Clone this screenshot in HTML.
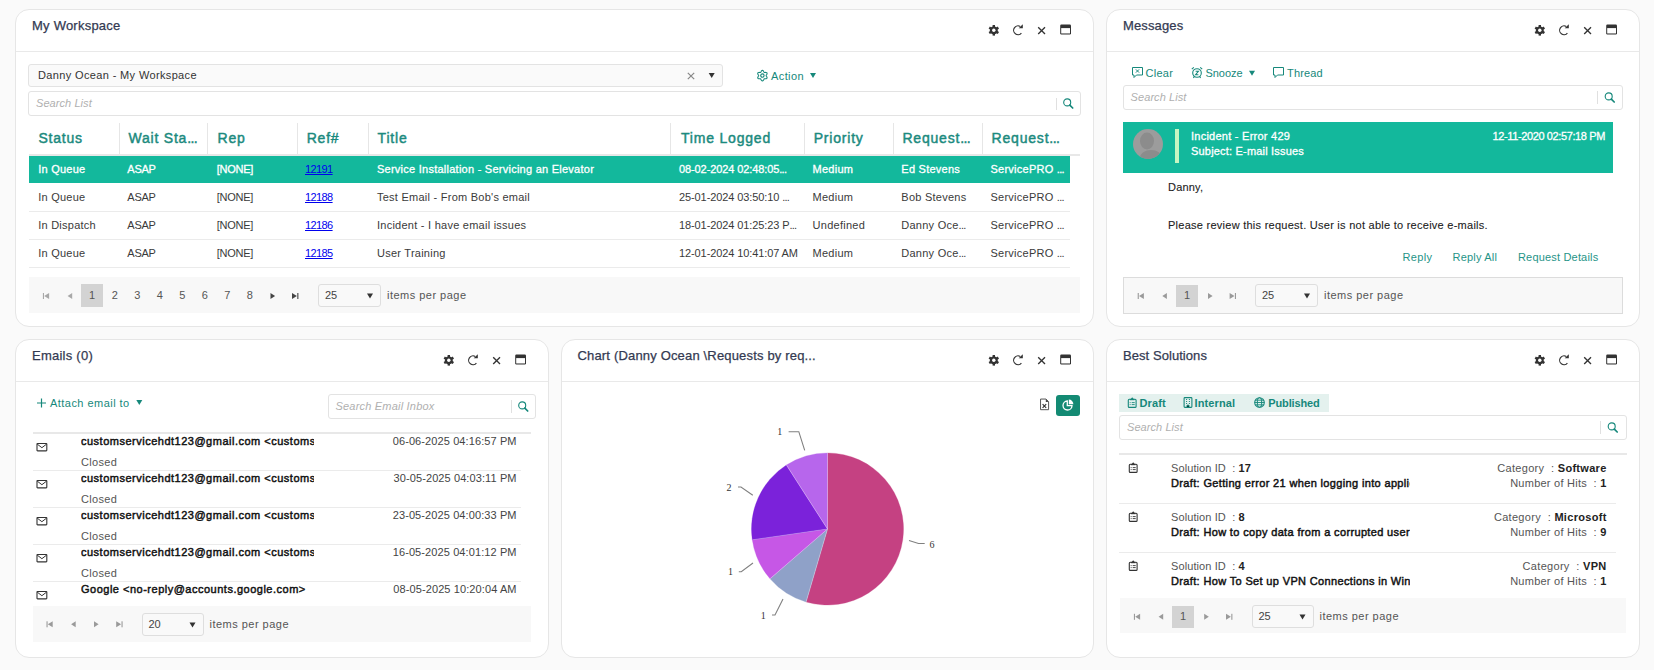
<!DOCTYPE html><html><head><meta charset="utf-8"><style>html,body{margin:0;padding:0;}body{width:1654px;height:670px;background:#fafafa;position:relative;overflow:hidden;font-family:"Liberation Sans",sans-serif;}</style></head><body>
<div style="position:absolute;left:15px;top:9px;width:1079px;height:318px;background:#fff;border:1px solid #e6e6e6;border-radius:14px;box-sizing:border-box;"></div>
<div style="position:absolute;left:16px;top:51px;width:1077px;height:1px;background:#e9e9e9;"></div>
<div style="position:absolute;left:32px;top:17.55px;font-size:13px;line-height:16px;font-weight:400;color:#343a52;white-space:nowrap;font-family:'Liberation Sans', sans-serif;letter-spacing:0.23px;-webkit-text-stroke:0.25px #343a52;">My Workspace</div>
<svg style="position:absolute;left:987px;top:24px;overflow:visible" width="13" height="13" viewBox="0 0 13 13"><g transform="translate(0.80 0.30)"><g fill="#333"><rect x="4.8" y="0.7" width="2.4" height="2.6" transform="rotate(0 6 6)"/><rect x="4.8" y="0.7" width="2.4" height="2.6" transform="rotate(60 6 6)"/><rect x="4.8" y="0.7" width="2.4" height="2.6" transform="rotate(120 6 6)"/><rect x="4.8" y="0.7" width="2.4" height="2.6" transform="rotate(180 6 6)"/><rect x="4.8" y="0.7" width="2.4" height="2.6" transform="rotate(240 6 6)"/><rect x="4.8" y="0.7" width="2.4" height="2.6" transform="rotate(300 6 6)"/><circle cx="6" cy="6" r="3.9"/></g><circle cx="6" cy="6" r="1.7" fill="#fff"/></g></svg>
<svg style="position:absolute;left:1012px;top:24px;overflow:visible" width="13" height="13" viewBox="0 0 13 13"><g transform="translate(0.00 0.10)"><path d="M9.4 9.0 A4.4 4.4 0 1 1 8.3 2.4" fill="none" stroke="#333" stroke-width="1.15"/><path d="M6.7 4.2 L10.8 4.2 L10.8 0.2 Z" fill="#333"/></g></svg>
<svg style="position:absolute;left:1037px;top:26px;overflow:visible" width="10" height="10" viewBox="0 0 10 10"><g transform="translate(0.10 0.10)"><path d="M1.1 1.1 L7.9 7.9 M7.9 1.1 L1.1 7.9" stroke="#333" stroke-width="1.35"/></g></svg>
<svg style="position:absolute;left:1059px;top:24px;overflow:visible" width="13" height="12" viewBox="0 0 13 12"><g transform="translate(0.70 0.00)"><rect x="0.5" y="0.5" width="10.8" height="9.9" rx="1.2" fill="#333"/><rect x="1.5" y="4.1" width="8.8" height="4.9" fill="#fff"/><rect x="1.5" y="9" width="8.8" height="0.9" fill="#999"/></g></svg>
<div style="position:absolute;left:28px;top:64px;width:695px;height:23px;background:#fafafa;border:1px solid #e3e3e3;border-radius:3px;box-sizing:border-box;"></div>
<div style="position:absolute;left:38px;top:68.74px;font-size:11px;line-height:13px;font-weight:400;color:#333;white-space:nowrap;font-family:'Liberation Sans', sans-serif;letter-spacing:0.36px;">Danny Ocean - My Workspace</div>
<svg style="position:absolute;left:687px;top:72px;overflow:visible" width="9" height="9" viewBox="0 0 9 9"><g transform="translate(0.00 0.00)"><path d="M0.8 0.8 L7.2 7.2 M7.2 0.8 L0.8 7.2" stroke="#888" stroke-width="1.2"/></g></svg>
<svg style="position:absolute;left:708px;top:73px;overflow:visible" width="7" height="6" viewBox="0 0 7 6"><g transform="translate(0.70 0.00)"><path d="M0 0 L6 0 L3.0 5 Z" fill="#333"/></g></svg>
<svg style="position:absolute;left:756px;top:69px;overflow:visible" width="13" height="13" viewBox="0 0 13 13"><g transform="translate(0.40 0.60)"><path d="M6.00 0.75 L6.45 0.87 L6.85 1.20 L7.16 1.65 L7.41 2.12 L7.63 2.51 L7.88 2.75 L8.21 2.85 L8.65 2.84 L9.18 2.82 L9.73 2.87 L10.22 3.05 L10.55 3.38 L10.67 3.82 L10.58 4.33 L10.35 4.84 L10.06 5.28 L9.84 5.66 L9.75 6.00 L9.84 6.34 L10.06 6.72 L10.35 7.16 L10.58 7.67 L10.67 8.18 L10.55 8.62 L10.22 8.95 L9.73 9.13 L9.18 9.18 L8.65 9.16 L8.21 9.15 L7.88 9.25 L7.63 9.49 L7.41 9.88 L7.16 10.35 L6.85 10.80 L6.45 11.13 L6.00 11.25 L5.55 11.13 L5.15 10.80 L4.84 10.35 L4.59 9.88 L4.37 9.49 L4.12 9.25 L3.79 9.15 L3.35 9.16 L2.82 9.18 L2.27 9.13 L1.78 8.95 L1.45 8.63 L1.33 8.18 L1.42 7.67 L1.65 7.16 L1.94 6.72 L2.16 6.34 L2.25 6.00 L2.16 5.66 L1.94 5.28 L1.65 4.84 L1.42 4.33 L1.33 3.82 L1.45 3.37 L1.78 3.05 L2.27 2.87 L2.82 2.82 L3.35 2.84 L3.79 2.85 L4.12 2.75 L4.37 2.51 L4.59 2.12 L4.84 1.65 L5.15 1.20 L5.55 0.87 Z" fill="none" stroke="#16887b" stroke-width="1.1" stroke-linejoin="round"/><circle cx="6" cy="6" r="1.7" fill="none" stroke="#16887b" stroke-width="1.1"/></g></svg>
<div style="position:absolute;left:771px;top:69.74px;font-size:11px;line-height:13px;font-weight:400;color:#16887b;white-space:nowrap;font-family:'Liberation Sans', sans-serif;letter-spacing:0.4px;">Action</div>
<svg style="position:absolute;left:810px;top:72px;overflow:visible" width="7" height="6" viewBox="0 0 7 6"><g transform="translate(0.00 0.90)"><path d="M0 0 L6 0 L3.0 5 Z" fill="#16887b"/></g></svg>
<div style="position:absolute;left:28px;top:91px;width:1053px;height:25px;background:#fff;border:1px solid #e3e3e3;border-radius:3px;box-sizing:border-box;"></div>
<div style="position:absolute;left:36px;top:96.74px;font-size:11px;line-height:13px;font-weight:400;color:#b0b0b0;white-space:nowrap;font-family:'Liberation Sans', sans-serif;letter-spacing:0.07px;font-style:italic;">Search List</div>
<div style="position:absolute;left:1056px;top:98px;width:1px;height:12px;background:#e0e0e0;"></div>
<svg style="position:absolute;left:1062px;top:97px;overflow:visible" width="13" height="13" viewBox="0 0 13 13"><g transform="translate(0.00 0.50)"><circle cx="5.2" cy="4.9" r="3.5" fill="none" stroke="#16887b" stroke-width="1.1"/><path d="M7.8 7.6 L10.7 10.5" stroke="#16887b" stroke-width="1.7" stroke-linecap="round"/></g></svg>
<div style="position:absolute;left:119px;top:123px;width:1px;height:31px;background:#e6e6e6;"></div>
<div style="position:absolute;left:207px;top:123px;width:1px;height:31px;background:#e6e6e6;"></div>
<div style="position:absolute;left:297px;top:123px;width:1px;height:31px;background:#e6e6e6;"></div>
<div style="position:absolute;left:368px;top:123px;width:1px;height:31px;background:#e6e6e6;"></div>
<div style="position:absolute;left:670px;top:123px;width:1px;height:31px;background:#e6e6e6;"></div>
<div style="position:absolute;left:804px;top:123px;width:1px;height:31px;background:#e6e6e6;"></div>
<div style="position:absolute;left:893px;top:123px;width:1px;height:31px;background:#e6e6e6;"></div>
<div style="position:absolute;left:982px;top:123px;width:1px;height:31px;background:#e6e6e6;"></div>
<div style="position:absolute;left:38.4px;top:129.70px;font-size:14px;line-height:17px;font-weight:400;color:#1b8a7e;white-space:nowrap;font-family:'Liberation Sans', sans-serif;letter-spacing:0.8px;-webkit-text-stroke:0.45px #1b8a7e;">Status</div>
<div style="position:absolute;left:128.4px;top:129.70px;font-size:14px;line-height:17px;font-weight:400;color:#1b8a7e;white-space:nowrap;font-family:'Liberation Sans', sans-serif;letter-spacing:0.8px;-webkit-text-stroke:0.45px #1b8a7e;">Wait Sta<span style="letter-spacing:-0.56px">...</span></div>
<div style="position:absolute;left:217.5px;top:129.70px;font-size:14px;line-height:17px;font-weight:400;color:#1b8a7e;white-space:nowrap;font-family:'Liberation Sans', sans-serif;letter-spacing:0.8px;-webkit-text-stroke:0.45px #1b8a7e;">Rep</div>
<div style="position:absolute;left:306.7px;top:129.70px;font-size:14px;line-height:17px;font-weight:400;color:#1b8a7e;white-space:nowrap;font-family:'Liberation Sans', sans-serif;letter-spacing:0.8px;-webkit-text-stroke:0.45px #1b8a7e;">Ref#</div>
<div style="position:absolute;left:377.6px;top:129.70px;font-size:14px;line-height:17px;font-weight:400;color:#1b8a7e;white-space:nowrap;font-family:'Liberation Sans', sans-serif;letter-spacing:0.8px;-webkit-text-stroke:0.45px #1b8a7e;">Title</div>
<div style="position:absolute;left:681px;top:129.70px;font-size:14px;line-height:17px;font-weight:400;color:#1b8a7e;white-space:nowrap;font-family:'Liberation Sans', sans-serif;letter-spacing:0.8px;-webkit-text-stroke:0.45px #1b8a7e;">Time Logged</div>
<div style="position:absolute;left:813.7px;top:129.70px;font-size:14px;line-height:17px;font-weight:400;color:#1b8a7e;white-space:nowrap;font-family:'Liberation Sans', sans-serif;letter-spacing:0.8px;-webkit-text-stroke:0.45px #1b8a7e;">Priority</div>
<div style="position:absolute;left:902.4px;top:129.70px;font-size:14px;line-height:17px;font-weight:400;color:#1b8a7e;white-space:nowrap;font-family:'Liberation Sans', sans-serif;letter-spacing:0.8px;-webkit-text-stroke:0.45px #1b8a7e;">Request<span style="letter-spacing:-0.56px">...</span></div>
<div style="position:absolute;left:991.6px;top:129.70px;font-size:14px;line-height:17px;font-weight:400;color:#1b8a7e;white-space:nowrap;font-family:'Liberation Sans', sans-serif;letter-spacing:0.8px;-webkit-text-stroke:0.45px #1b8a7e;">Request<span style="letter-spacing:-0.56px">...</span></div>
<div style="position:absolute;left:29px;top:154px;width:1051px;height:2px;background:#e8e8e8;"></div>
<div style="position:absolute;left:29px;top:156px;width:1041px;height:27px;background:#13b89c;"></div>
<div style="position:absolute;left:38.2px;top:162.74px;font-size:11px;line-height:13px;font-weight:400;color:#fff;white-space:nowrap;font-family:'Liberation Sans', sans-serif;letter-spacing:0.25px;-webkit-text-stroke:0.3px #fff;">In Queue</div>
<div style="position:absolute;left:127.3px;top:162.74px;font-size:11px;line-height:13px;font-weight:400;color:#fff;white-space:nowrap;font-family:'Liberation Sans', sans-serif;letter-spacing:-0.25px;-webkit-text-stroke:0.3px #fff;">ASAP</div>
<div style="position:absolute;left:216.7px;top:162.74px;font-size:11px;line-height:13px;font-weight:400;color:#fff;white-space:nowrap;font-family:'Liberation Sans', sans-serif;letter-spacing:-0.25px;-webkit-text-stroke:0.3px #fff;">[NONE]</div>
<div style="position:absolute;left:305px;top:162.74px;font-size:11px;line-height:13px;font-weight:400;color:#0000ee;white-space:nowrap;font-family:'Liberation Sans', sans-serif;letter-spacing:-0.6px;text-decoration:underline;">12191</div>
<div style="position:absolute;left:377px;top:162.74px;font-size:11px;line-height:13px;font-weight:400;color:#fff;white-space:nowrap;font-family:'Liberation Sans', sans-serif;letter-spacing:0.25px;-webkit-text-stroke:0.3px #fff;">Service Installation - Servicing an Elevator</div>
<div style="position:absolute;left:679px;top:162.74px;font-size:11px;line-height:13px;font-weight:400;color:#fff;white-space:nowrap;font-family:'Liberation Sans', sans-serif;letter-spacing:-0.1px;-webkit-text-stroke:0.3px #fff;">08-02-2024 02:48:05<span style="letter-spacing:-0.73px">...</span></div>
<div style="position:absolute;left:812.6px;top:162.74px;font-size:11px;line-height:13px;font-weight:400;color:#fff;white-space:nowrap;font-family:'Liberation Sans', sans-serif;letter-spacing:0.25px;-webkit-text-stroke:0.3px #fff;">Medium</div>
<div style="position:absolute;left:901.3px;top:162.74px;font-size:11px;line-height:13px;font-weight:400;color:#fff;white-space:nowrap;font-family:'Liberation Sans', sans-serif;letter-spacing:0.25px;-webkit-text-stroke:0.3px #fff;">Ed Stevens</div>
<div style="position:absolute;left:990.5px;top:162.74px;font-size:11px;line-height:13px;font-weight:400;color:#fff;white-space:nowrap;font-family:'Liberation Sans', sans-serif;letter-spacing:0.25px;-webkit-text-stroke:0.3px #fff;">ServicePRO <span style="letter-spacing:-0.73px">...</span></div>
<div style="position:absolute;left:29px;top:211px;width:1041px;height:1px;background:#ebebeb;"></div>
<div style="position:absolute;left:38.2px;top:190.74px;font-size:11px;line-height:13px;font-weight:400;color:#3a3a3a;white-space:nowrap;font-family:'Liberation Sans', sans-serif;letter-spacing:0.25px;">In Queue</div>
<div style="position:absolute;left:127.3px;top:190.74px;font-size:11px;line-height:13px;font-weight:400;color:#3a3a3a;white-space:nowrap;font-family:'Liberation Sans', sans-serif;letter-spacing:-0.25px;">ASAP</div>
<div style="position:absolute;left:216.7px;top:190.74px;font-size:11px;line-height:13px;font-weight:400;color:#3a3a3a;white-space:nowrap;font-family:'Liberation Sans', sans-serif;letter-spacing:-0.25px;">[NONE]</div>
<div style="position:absolute;left:305px;top:190.74px;font-size:11px;line-height:13px;font-weight:400;color:#0000ee;white-space:nowrap;font-family:'Liberation Sans', sans-serif;letter-spacing:-0.6px;text-decoration:underline;">12188</div>
<div style="position:absolute;left:377px;top:190.74px;font-size:11px;line-height:13px;font-weight:400;color:#3a3a3a;white-space:nowrap;font-family:'Liberation Sans', sans-serif;letter-spacing:0.25px;">Test Email - From Bob's email</div>
<div style="position:absolute;left:679px;top:190.74px;font-size:11px;line-height:13px;font-weight:400;color:#3a3a3a;white-space:nowrap;font-family:'Liberation Sans', sans-serif;letter-spacing:-0.1px;">25-01-2024 03:50:10 <span style="letter-spacing:-0.73px">...</span></div>
<div style="position:absolute;left:812.6px;top:190.74px;font-size:11px;line-height:13px;font-weight:400;color:#3a3a3a;white-space:nowrap;font-family:'Liberation Sans', sans-serif;letter-spacing:0.25px;">Medium</div>
<div style="position:absolute;left:901.3px;top:190.74px;font-size:11px;line-height:13px;font-weight:400;color:#3a3a3a;white-space:nowrap;font-family:'Liberation Sans', sans-serif;letter-spacing:0.25px;">Bob Stevens</div>
<div style="position:absolute;left:990.5px;top:190.74px;font-size:11px;line-height:13px;font-weight:400;color:#3a3a3a;white-space:nowrap;font-family:'Liberation Sans', sans-serif;letter-spacing:0.25px;">ServicePRO <span style="letter-spacing:-0.73px">...</span></div>
<div style="position:absolute;left:29px;top:239px;width:1041px;height:1px;background:#ebebeb;"></div>
<div style="position:absolute;left:38.2px;top:218.74px;font-size:11px;line-height:13px;font-weight:400;color:#3a3a3a;white-space:nowrap;font-family:'Liberation Sans', sans-serif;letter-spacing:0.25px;">In Dispatch</div>
<div style="position:absolute;left:127.3px;top:218.74px;font-size:11px;line-height:13px;font-weight:400;color:#3a3a3a;white-space:nowrap;font-family:'Liberation Sans', sans-serif;letter-spacing:-0.25px;">ASAP</div>
<div style="position:absolute;left:216.7px;top:218.74px;font-size:11px;line-height:13px;font-weight:400;color:#3a3a3a;white-space:nowrap;font-family:'Liberation Sans', sans-serif;letter-spacing:-0.25px;">[NONE]</div>
<div style="position:absolute;left:305px;top:218.74px;font-size:11px;line-height:13px;font-weight:400;color:#0000ee;white-space:nowrap;font-family:'Liberation Sans', sans-serif;letter-spacing:-0.6px;text-decoration:underline;">12186</div>
<div style="position:absolute;left:377px;top:218.74px;font-size:11px;line-height:13px;font-weight:400;color:#3a3a3a;white-space:nowrap;font-family:'Liberation Sans', sans-serif;letter-spacing:0.25px;">Incident - I have email issues</div>
<div style="position:absolute;left:679px;top:218.74px;font-size:11px;line-height:13px;font-weight:400;color:#3a3a3a;white-space:nowrap;font-family:'Liberation Sans', sans-serif;letter-spacing:-0.1px;">18-01-2024 01:25:23 P<span style="letter-spacing:-0.73px">...</span></div>
<div style="position:absolute;left:812.6px;top:218.74px;font-size:11px;line-height:13px;font-weight:400;color:#3a3a3a;white-space:nowrap;font-family:'Liberation Sans', sans-serif;letter-spacing:0.25px;">Undefined</div>
<div style="position:absolute;left:901.3px;top:218.74px;font-size:11px;line-height:13px;font-weight:400;color:#3a3a3a;white-space:nowrap;font-family:'Liberation Sans', sans-serif;letter-spacing:0.25px;">Danny Oce<span style="letter-spacing:-0.73px">...</span></div>
<div style="position:absolute;left:990.5px;top:218.74px;font-size:11px;line-height:13px;font-weight:400;color:#3a3a3a;white-space:nowrap;font-family:'Liberation Sans', sans-serif;letter-spacing:0.25px;">ServicePRO <span style="letter-spacing:-0.73px">...</span></div>
<div style="position:absolute;left:29px;top:267px;width:1041px;height:1px;background:#ebebeb;"></div>
<div style="position:absolute;left:38.2px;top:246.74px;font-size:11px;line-height:13px;font-weight:400;color:#3a3a3a;white-space:nowrap;font-family:'Liberation Sans', sans-serif;letter-spacing:0.25px;">In Queue</div>
<div style="position:absolute;left:127.3px;top:246.74px;font-size:11px;line-height:13px;font-weight:400;color:#3a3a3a;white-space:nowrap;font-family:'Liberation Sans', sans-serif;letter-spacing:-0.25px;">ASAP</div>
<div style="position:absolute;left:216.7px;top:246.74px;font-size:11px;line-height:13px;font-weight:400;color:#3a3a3a;white-space:nowrap;font-family:'Liberation Sans', sans-serif;letter-spacing:-0.25px;">[NONE]</div>
<div style="position:absolute;left:305px;top:246.74px;font-size:11px;line-height:13px;font-weight:400;color:#0000ee;white-space:nowrap;font-family:'Liberation Sans', sans-serif;letter-spacing:-0.6px;text-decoration:underline;">12185</div>
<div style="position:absolute;left:377px;top:246.74px;font-size:11px;line-height:13px;font-weight:400;color:#3a3a3a;white-space:nowrap;font-family:'Liberation Sans', sans-serif;letter-spacing:0.25px;">User Training</div>
<div style="position:absolute;left:679px;top:246.74px;font-size:11px;line-height:13px;font-weight:400;color:#3a3a3a;white-space:nowrap;font-family:'Liberation Sans', sans-serif;letter-spacing:-0.1px;">12-01-2024 10:41:07 AM</div>
<div style="position:absolute;left:812.6px;top:246.74px;font-size:11px;line-height:13px;font-weight:400;color:#3a3a3a;white-space:nowrap;font-family:'Liberation Sans', sans-serif;letter-spacing:0.25px;">Medium</div>
<div style="position:absolute;left:901.3px;top:246.74px;font-size:11px;line-height:13px;font-weight:400;color:#3a3a3a;white-space:nowrap;font-family:'Liberation Sans', sans-serif;letter-spacing:0.25px;">Danny Oce<span style="letter-spacing:-0.73px">...</span></div>
<div style="position:absolute;left:990.5px;top:246.74px;font-size:11px;line-height:13px;font-weight:400;color:#3a3a3a;white-space:nowrap;font-family:'Liberation Sans', sans-serif;letter-spacing:0.25px;">ServicePRO <span style="letter-spacing:-0.73px">...</span></div>
<div style="position:absolute;left:29px;top:267px;width:1041px;height:1px;background:#ebebeb;"></div>
<div style="position:absolute;left:29px;top:268px;width:1041px;height:9px;overflow:hidden;">
<div style="position:absolute;left:188px;top:6.74px;font-size:11px;line-height:13px;font-weight:400;color:#3a3a3a;white-space:nowrap;font-family:'Liberation Sans', sans-serif;letter-spacing:-0.25px;">[<span style="color:transparent">NONE</span>]</div>
</div>
<div style="position:absolute;left:29px;top:277px;width:1051px;height:36px;background:#f8f8f8;"></div>
<svg style="position:absolute;left:42px;top:293px;overflow:visible" width="8" height="7" viewBox="0 0 8 7"><g transform="translate(0.90 0.00)"><rect x="0" y="0" width="1.1" height="6" fill="#a8a8a8"/><path d="M6.2 0 L1.3 3 L6.2 6 Z" fill="#a8a8a8"/></g></svg>
<svg style="position:absolute;left:67px;top:293px;overflow:visible" width="7" height="7" viewBox="0 0 7 7"><g transform="translate(0.30 0.00)"><path d="M4.9 0 L0.3 3 L4.9 6 Z" fill="#a8a8a8"/></g></svg>
<svg style="position:absolute;left:270px;top:293px;overflow:visible" width="7" height="7" viewBox="0 0 7 7"><g transform="translate(0.20 0.00)"><path d="M0.3 0 L4.9 3 L0.3 6 Z" fill="#444"/></g></svg>
<svg style="position:absolute;left:292px;top:293px;overflow:visible" width="8" height="7" viewBox="0 0 8 7"><g transform="translate(0.00 0.00)"><rect x="5.3" y="0" width="1.1" height="6" fill="#444"/><path d="M0 0 L4.9 3 L0 6 Z" fill="#444"/></g></svg>
<div style="position:absolute;left:81px;top:284px;width:22px;height:23px;background:#d3d3d3;"></div>
<div style="position:absolute;left:92px;top:288.74px;font-size:11px;line-height:13px;font-weight:400;color:#555;white-space:nowrap;font-family:'Liberation Sans', sans-serif;transform:translateX(-50%);">1</div>
<div style="position:absolute;left:114.7px;top:288.74px;font-size:11px;line-height:13px;font-weight:400;color:#555;white-space:nowrap;font-family:'Liberation Sans', sans-serif;transform:translateX(-50%);">2</div>
<div style="position:absolute;left:137.2px;top:288.74px;font-size:11px;line-height:13px;font-weight:400;color:#555;white-space:nowrap;font-family:'Liberation Sans', sans-serif;transform:translateX(-50%);">3</div>
<div style="position:absolute;left:159.7px;top:288.74px;font-size:11px;line-height:13px;font-weight:400;color:#555;white-space:nowrap;font-family:'Liberation Sans', sans-serif;transform:translateX(-50%);">4</div>
<div style="position:absolute;left:182.2px;top:288.74px;font-size:11px;line-height:13px;font-weight:400;color:#555;white-space:nowrap;font-family:'Liberation Sans', sans-serif;transform:translateX(-50%);">5</div>
<div style="position:absolute;left:204.7px;top:288.74px;font-size:11px;line-height:13px;font-weight:400;color:#555;white-space:nowrap;font-family:'Liberation Sans', sans-serif;transform:translateX(-50%);">6</div>
<div style="position:absolute;left:227.2px;top:288.74px;font-size:11px;line-height:13px;font-weight:400;color:#555;white-space:nowrap;font-family:'Liberation Sans', sans-serif;transform:translateX(-50%);">7</div>
<div style="position:absolute;left:249.7px;top:288.74px;font-size:11px;line-height:13px;font-weight:400;color:#555;white-space:nowrap;font-family:'Liberation Sans', sans-serif;transform:translateX(-50%);">8</div>
<div style="position:absolute;left:318px;top:284px;width:63px;height:23px;background:#f9f9f9;border:1px solid #dedede;border-radius:3px;box-sizing:border-box;"></div>
<div style="position:absolute;left:325px;top:288.74px;font-size:11px;line-height:13px;font-weight:400;color:#444;white-space:nowrap;font-family:'Liberation Sans', sans-serif;">25</div>
<svg style="position:absolute;left:367px;top:293px;overflow:visible" width="7" height="6" viewBox="0 0 7 6"><g transform="translate(0.00 0.50)"><path d="M0 0 L6 0 L3.0 5 Z" fill="#333"/></g></svg>
<div style="position:absolute;left:387px;top:288.74px;font-size:11px;line-height:13px;font-weight:400;color:#555;white-space:nowrap;font-family:'Liberation Sans', sans-serif;letter-spacing:0.48px;">items per page</div>
<div style="position:absolute;left:1106px;top:9px;width:534px;height:318px;background:#fff;border:1px solid #e6e6e6;border-radius:14px;box-sizing:border-box;"></div>
<div style="position:absolute;left:1107px;top:51px;width:532px;height:1px;background:#e9e9e9;"></div>
<div style="position:absolute;left:1123px;top:17.55px;font-size:13px;line-height:16px;font-weight:400;color:#343a52;white-space:nowrap;font-family:'Liberation Sans', sans-serif;letter-spacing:0.14px;-webkit-text-stroke:0.25px #343a52;">Messages</div>
<svg style="position:absolute;left:1533px;top:24px;overflow:visible" width="13" height="13" viewBox="0 0 13 13"><g transform="translate(0.80 0.30)"><g fill="#333"><rect x="4.8" y="0.7" width="2.4" height="2.6" transform="rotate(0 6 6)"/><rect x="4.8" y="0.7" width="2.4" height="2.6" transform="rotate(60 6 6)"/><rect x="4.8" y="0.7" width="2.4" height="2.6" transform="rotate(120 6 6)"/><rect x="4.8" y="0.7" width="2.4" height="2.6" transform="rotate(180 6 6)"/><rect x="4.8" y="0.7" width="2.4" height="2.6" transform="rotate(240 6 6)"/><rect x="4.8" y="0.7" width="2.4" height="2.6" transform="rotate(300 6 6)"/><circle cx="6" cy="6" r="3.9"/></g><circle cx="6" cy="6" r="1.7" fill="#fff"/></g></svg>
<svg style="position:absolute;left:1558px;top:24px;overflow:visible" width="13" height="13" viewBox="0 0 13 13"><g transform="translate(0.00 0.10)"><path d="M9.4 9.0 A4.4 4.4 0 1 1 8.3 2.4" fill="none" stroke="#333" stroke-width="1.15"/><path d="M6.7 4.2 L10.8 4.2 L10.8 0.2 Z" fill="#333"/></g></svg>
<svg style="position:absolute;left:1583px;top:26px;overflow:visible" width="10" height="10" viewBox="0 0 10 10"><g transform="translate(0.10 0.10)"><path d="M1.1 1.1 L7.9 7.9 M7.9 1.1 L1.1 7.9" stroke="#333" stroke-width="1.35"/></g></svg>
<svg style="position:absolute;left:1605px;top:24px;overflow:visible" width="13" height="12" viewBox="0 0 13 12"><g transform="translate(0.70 0.00)"><rect x="0.5" y="0.5" width="10.8" height="9.9" rx="1.2" fill="#333"/><rect x="1.5" y="4.1" width="8.8" height="4.9" fill="#fff"/><rect x="1.5" y="9" width="8.8" height="0.9" fill="#999"/></g></svg>
<svg style="position:absolute;left:1131px;top:66px;overflow:visible" width="13" height="13" viewBox="0 0 13 13"><g transform="translate(0.50 0.50)"><path d="M1 1 H11 V8.5 H5 L2.5 11 V8.5 H1 Z" fill="none" stroke="#16887b" stroke-width="1" stroke-linejoin="round"/><path d="M4.4 2.9 L7.6 6.1 M7.6 2.9 L4.4 6.1" stroke="#16887b" stroke-width="1"/></g></svg>
<div style="position:absolute;left:1145.6px;top:66.74px;font-size:11px;line-height:13px;font-weight:400;color:#16887b;white-space:nowrap;font-family:'Liberation Sans', sans-serif;letter-spacing:0.25px;">Clear</div>
<svg style="position:absolute;left:1191px;top:66px;overflow:visible" width="13" height="13" viewBox="0 0 13 13"><g transform="translate(0.00 0.50)"><circle cx="6" cy="6.5" r="4.3" fill="none" stroke="#16887b" stroke-width="1.1"/><path d="M0.8 2.6 L2.8 0.8 M11.2 2.6 L9.2 0.8 M4.6 4.8 H7.4 L4.6 8.2 H7.4 M2.4 11.4 L3.3 10.2 M9.6 11.4 L8.7 10.2" stroke="#16887b" stroke-width="1.1" fill="none"/></g></svg>
<div style="position:absolute;left:1205.5px;top:66.74px;font-size:11px;line-height:13px;font-weight:400;color:#16887b;white-space:nowrap;font-family:'Liberation Sans', sans-serif;letter-spacing:-0.05px;">Snooze</div>
<svg style="position:absolute;left:1249px;top:70px;overflow:visible" width="7" height="6" viewBox="0 0 7 6"><g transform="translate(0.00 0.80)"><path d="M0 0 L6 0 L3.0 5 Z" fill="#16887b"/></g></svg>
<svg style="position:absolute;left:1272px;top:66px;overflow:visible" width="13" height="13" viewBox="0 0 13 13"><g transform="translate(0.50 0.50)"><path d="M1 1 H11 V8.5 H5 L2.5 11 V8.5 H1 Z" fill="none" stroke="#16887b" stroke-width="1" stroke-linejoin="round"/></g></svg>
<div style="position:absolute;left:1287px;top:66.74px;font-size:11px;line-height:13px;font-weight:400;color:#16887b;white-space:nowrap;font-family:'Liberation Sans', sans-serif;letter-spacing:0.16px;">Thread</div>
<div style="position:absolute;left:1123px;top:85px;width:500px;height:25px;background:#fff;border:1px solid #e3e3e3;border-radius:3px;box-sizing:border-box;"></div>
<div style="position:absolute;left:1130.6px;top:90.74px;font-size:11px;line-height:13px;font-weight:400;color:#b0b0b0;white-space:nowrap;font-family:'Liberation Sans', sans-serif;letter-spacing:0.07px;font-style:italic;">Search List</div>
<div style="position:absolute;left:1597px;top:91px;width:1px;height:13px;background:#e0e0e0;"></div>
<svg style="position:absolute;left:1603px;top:91px;overflow:visible" width="13" height="13" viewBox="0 0 13 13"><g transform="translate(0.50 0.50)"><circle cx="5.2" cy="4.9" r="3.5" fill="none" stroke="#16887b" stroke-width="1.1"/><path d="M7.8 7.6 L10.7 10.5" stroke="#16887b" stroke-width="1.7" stroke-linecap="round"/></g></svg>
<div style="position:absolute;left:1123px;top:122px;width:490px;height:51px;background:#13b89c;"></div>
<svg style="position:absolute;left:1133px;top:129px;overflow:visible" width="31" height="31" viewBox="0 0 31 31"><g transform="translate(0.00 0.00)"><defs><clipPath id="av"><circle cx="15" cy="15" r="15"/></clipPath></defs><circle cx="15" cy="15" r="15" fill="#9c9c9c"/><g clip-path="url(#av)" fill="#8c8c8c"><ellipse cx="14" cy="12" rx="7" ry="8.5"/><ellipse cx="18" cy="29" rx="11" ry="8"/></g></g></svg>
<div style="position:absolute;left:1175px;top:129px;width:4px;height:34px;background:#c6f6c2;"></div>
<div style="position:absolute;left:1191px;top:129.74px;font-size:11px;line-height:13px;font-weight:400;color:#fff;white-space:nowrap;font-family:'Liberation Sans', sans-serif;letter-spacing:0.25px;-webkit-text-stroke:0.3px #fff;">Incident - Error 429</div>
<div style="position:absolute;left:1191px;top:144.74px;font-size:11px;line-height:13px;font-weight:400;color:#fff;white-space:nowrap;font-family:'Liberation Sans', sans-serif;letter-spacing:0.19px;-webkit-text-stroke:0.3px #fff;">Subject: E-mail Issues</div>
<div style="position:absolute;right:49px;top:129.74px;font-size:11px;line-height:13px;font-weight:400;color:#fff;white-space:nowrap;font-family:'Liberation Sans', sans-serif;letter-spacing:-0.38px;-webkit-text-stroke:0.3px #fff;">12-11-2020 02:57:18 PM</div>
<div style="position:absolute;left:1168px;top:180.74px;font-size:11px;line-height:13px;font-weight:400;color:#222;white-space:nowrap;font-family:'Liberation Sans', sans-serif;letter-spacing:0.19px;-webkit-text-stroke:0.1px #222;">Danny,</div>
<div style="position:absolute;left:1168px;top:218.74px;font-size:11px;line-height:13px;font-weight:400;color:#222;white-space:nowrap;font-family:'Liberation Sans', sans-serif;letter-spacing:0.26px;-webkit-text-stroke:0.1px #222;">Please review this request. User is not able to receive e-mails.</div>
<div style="position:absolute;left:1402.6px;top:250.74px;font-size:11px;line-height:13px;font-weight:400;color:#1f9488;white-space:nowrap;font-family:'Liberation Sans', sans-serif;letter-spacing:0.3px;">Reply</div>
<div style="position:absolute;left:1452.5px;top:250.74px;font-size:11px;line-height:13px;font-weight:400;color:#1f9488;white-space:nowrap;font-family:'Liberation Sans', sans-serif;letter-spacing:0.2px;">Reply All</div>
<div style="position:absolute;left:1518px;top:250.74px;font-size:11px;line-height:13px;font-weight:400;color:#1f9488;white-space:nowrap;font-family:'Liberation Sans', sans-serif;letter-spacing:0.18px;">Request Details</div>
<div style="position:absolute;left:1123px;top:277px;width:500px;height:37px;background:#f8f8f8;border:1px solid #dcdcdc;box-sizing:border-box;"></div>
<svg style="position:absolute;left:1137px;top:293px;overflow:visible" width="8" height="7" viewBox="0 0 8 7"><g transform="translate(0.70 0.00)"><rect x="0" y="0" width="1.1" height="6" fill="#9a9a9a"/><path d="M6.2 0 L1.3 3 L6.2 6 Z" fill="#9a9a9a"/></g></svg>
<svg style="position:absolute;left:1162px;top:293px;overflow:visible" width="7" height="7" viewBox="0 0 7 7"><g transform="translate(0.00 0.00)"><path d="M4.9 0 L0.3 3 L4.9 6 Z" fill="#9a9a9a"/></g></svg>
<svg style="position:absolute;left:1207px;top:293px;overflow:visible" width="7" height="7" viewBox="0 0 7 7"><g transform="translate(0.70 0.00)"><path d="M0.3 0 L4.9 3 L0.3 6 Z" fill="#9a9a9a"/></g></svg>
<svg style="position:absolute;left:1229px;top:293px;overflow:visible" width="8" height="7" viewBox="0 0 8 7"><g transform="translate(0.60 0.00)"><rect x="5.3" y="0" width="1.1" height="6" fill="#9a9a9a"/><path d="M0 0 L4.9 3 L0 6 Z" fill="#9a9a9a"/></g></svg>
<div style="position:absolute;left:1176px;top:285px;width:22px;height:22px;background:#d3d3d3;"></div>
<div style="position:absolute;left:1187px;top:288.74px;font-size:11px;line-height:13px;font-weight:400;color:#555;white-space:nowrap;font-family:'Liberation Sans', sans-serif;transform:translateX(-50%);">1</div>
<div style="position:absolute;left:1255px;top:284px;width:63px;height:23px;background:#f9f9f9;border:1px solid #dedede;border-radius:3px;box-sizing:border-box;"></div>
<div style="position:absolute;left:1262px;top:288.74px;font-size:11px;line-height:13px;font-weight:400;color:#444;white-space:nowrap;font-family:'Liberation Sans', sans-serif;">25</div>
<svg style="position:absolute;left:1304px;top:293px;overflow:visible" width="7" height="6" viewBox="0 0 7 6"><g transform="translate(0.00 0.50)"><path d="M0 0 L6 0 L3.0 5 Z" fill="#333"/></g></svg>
<div style="position:absolute;left:1324px;top:288.74px;font-size:11px;line-height:13px;font-weight:400;color:#555;white-space:nowrap;font-family:'Liberation Sans', sans-serif;letter-spacing:0.48px;">items per page</div>
<div style="position:absolute;left:15px;top:339px;width:534px;height:319px;background:#fff;border:1px solid #e6e6e6;border-radius:14px;box-sizing:border-box;"></div>
<div style="position:absolute;left:16px;top:381px;width:532px;height:1px;background:#e9e9e9;"></div>
<div style="position:absolute;left:32px;top:347.55px;font-size:13px;line-height:16px;font-weight:400;color:#343a52;white-space:nowrap;font-family:'Liberation Sans', sans-serif;letter-spacing:0.25px;-webkit-text-stroke:0.25px #343a52;">Emails (0)</div>
<svg style="position:absolute;left:442px;top:354px;overflow:visible" width="13" height="13" viewBox="0 0 13 13"><g transform="translate(0.80 0.30)"><g fill="#333"><rect x="4.8" y="0.7" width="2.4" height="2.6" transform="rotate(0 6 6)"/><rect x="4.8" y="0.7" width="2.4" height="2.6" transform="rotate(60 6 6)"/><rect x="4.8" y="0.7" width="2.4" height="2.6" transform="rotate(120 6 6)"/><rect x="4.8" y="0.7" width="2.4" height="2.6" transform="rotate(180 6 6)"/><rect x="4.8" y="0.7" width="2.4" height="2.6" transform="rotate(240 6 6)"/><rect x="4.8" y="0.7" width="2.4" height="2.6" transform="rotate(300 6 6)"/><circle cx="6" cy="6" r="3.9"/></g><circle cx="6" cy="6" r="1.7" fill="#fff"/></g></svg>
<svg style="position:absolute;left:467px;top:354px;overflow:visible" width="13" height="13" viewBox="0 0 13 13"><g transform="translate(0.00 0.10)"><path d="M9.4 9.0 A4.4 4.4 0 1 1 8.3 2.4" fill="none" stroke="#333" stroke-width="1.15"/><path d="M6.7 4.2 L10.8 4.2 L10.8 0.2 Z" fill="#333"/></g></svg>
<svg style="position:absolute;left:492px;top:356px;overflow:visible" width="10" height="10" viewBox="0 0 10 10"><g transform="translate(0.10 0.10)"><path d="M1.1 1.1 L7.9 7.9 M7.9 1.1 L1.1 7.9" stroke="#333" stroke-width="1.35"/></g></svg>
<svg style="position:absolute;left:514px;top:354px;overflow:visible" width="13" height="12" viewBox="0 0 13 12"><g transform="translate(0.70 0.00)"><rect x="0.5" y="0.5" width="10.8" height="9.9" rx="1.2" fill="#333"/><rect x="1.5" y="4.1" width="8.8" height="4.9" fill="#fff"/><rect x="1.5" y="9" width="8.8" height="0.9" fill="#999"/></g></svg>
<svg style="position:absolute;left:36px;top:398px;overflow:visible" width="11" height="11" viewBox="0 0 11 11"><g transform="translate(0.50 0.00)"><path d="M5 0.5 V9.5 M0.5 5 H9.5" stroke="#16887b" stroke-width="1.2"/></g></svg>
<div style="position:absolute;left:50px;top:396.74px;font-size:11px;line-height:13px;font-weight:400;color:#16887b;white-space:nowrap;font-family:'Liberation Sans', sans-serif;letter-spacing:0.46px;">Attach email to</div>
<svg style="position:absolute;left:136px;top:400px;overflow:visible" width="7" height="6" viewBox="0 0 7 6"><g transform="translate(0.30 0.00)"><path d="M0 0 L6 0 L3.0 5 Z" fill="#16887b"/></g></svg>
<div style="position:absolute;left:328px;top:394px;width:208px;height:25px;background:#fff;border:1px solid #e3e3e3;border-radius:3px;box-sizing:border-box;"></div>
<div style="position:absolute;left:335.5px;top:399.74px;font-size:11px;line-height:13px;font-weight:400;color:#b0b0b0;white-space:nowrap;font-family:'Liberation Sans', sans-serif;letter-spacing:0.2px;font-style:italic;">Search Email Inbox</div>
<div style="position:absolute;left:511px;top:400px;width:1px;height:13px;background:#e0e0e0;"></div>
<svg style="position:absolute;left:517px;top:400px;overflow:visible" width="13" height="13" viewBox="0 0 13 13"><g transform="translate(0.00 0.50)"><circle cx="5.2" cy="4.9" r="3.5" fill="none" stroke="#16887b" stroke-width="1.1"/><path d="M7.8 7.6 L10.7 10.5" stroke="#16887b" stroke-width="1.7" stroke-linecap="round"/></g></svg>
<div style="position:absolute;left:33px;top:432px;width:498px;height:2px;background:#e8e8e8;"></div>
<svg style="position:absolute;left:36px;top:442px;overflow:visible" width="12" height="10" viewBox="0 0 12 10"><g transform="translate(0.40 0.90)"><rect x="0.6" y="0.6" width="9.8" height="7.4" rx="0.6" fill="none" stroke="#333" stroke-width="1.1"/><path d="M0.8 1.2 L5.5 4.8 L10.2 1.2" fill="none" stroke="#333" stroke-width="1"/></g></svg>
<div style="position:absolute;left:81px;top:434.74px;font-size:11px;line-height:13px;font-weight:400;color:#111;white-space:nowrap;font-family:'Liberation Sans', sans-serif;letter-spacing:0.5px;-webkit-text-stroke:0.45px #111;width:233px;overflow:hidden;">customservicehdt123@gmail.com &lt;customservicehdt123@gmail.com&gt;</div>
<div style="position:absolute;right:1137.4px;top:434.74px;font-size:11px;line-height:13px;font-weight:400;color:#444;white-space:nowrap;font-family:'Liberation Sans', sans-serif;letter-spacing:0.1px;">06-06-2025 04:16:57 PM</div>
<div style="position:absolute;left:81px;top:455.74px;font-size:11px;line-height:13px;font-weight:400;color:#555;white-space:nowrap;font-family:'Liberation Sans', sans-serif;letter-spacing:0.34px;">Closed</div>
<div style="position:absolute;left:33px;top:470px;width:488px;height:1px;background:#ebebeb;"></div>
<svg style="position:absolute;left:36px;top:479px;overflow:visible" width="12" height="10" viewBox="0 0 12 10"><g transform="translate(0.40 0.90)"><rect x="0.6" y="0.6" width="9.8" height="7.4" rx="0.6" fill="none" stroke="#333" stroke-width="1.1"/><path d="M0.8 1.2 L5.5 4.8 L10.2 1.2" fill="none" stroke="#333" stroke-width="1"/></g></svg>
<div style="position:absolute;left:81px;top:471.74px;font-size:11px;line-height:13px;font-weight:400;color:#111;white-space:nowrap;font-family:'Liberation Sans', sans-serif;letter-spacing:0.5px;-webkit-text-stroke:0.45px #111;width:233px;overflow:hidden;">customservicehdt123@gmail.com &lt;customservicehdt123@gmail.com&gt;</div>
<div style="position:absolute;right:1137.4px;top:471.74px;font-size:11px;line-height:13px;font-weight:400;color:#444;white-space:nowrap;font-family:'Liberation Sans', sans-serif;letter-spacing:0.1px;">30-05-2025 04:03:11 PM</div>
<div style="position:absolute;left:81px;top:492.74px;font-size:11px;line-height:13px;font-weight:400;color:#555;white-space:nowrap;font-family:'Liberation Sans', sans-serif;letter-spacing:0.34px;">Closed</div>
<div style="position:absolute;left:33px;top:507px;width:488px;height:1px;background:#ebebeb;"></div>
<svg style="position:absolute;left:36px;top:516px;overflow:visible" width="12" height="10" viewBox="0 0 12 10"><g transform="translate(0.40 0.90)"><rect x="0.6" y="0.6" width="9.8" height="7.4" rx="0.6" fill="none" stroke="#333" stroke-width="1.1"/><path d="M0.8 1.2 L5.5 4.8 L10.2 1.2" fill="none" stroke="#333" stroke-width="1"/></g></svg>
<div style="position:absolute;left:81px;top:508.74px;font-size:11px;line-height:13px;font-weight:400;color:#111;white-space:nowrap;font-family:'Liberation Sans', sans-serif;letter-spacing:0.5px;-webkit-text-stroke:0.45px #111;width:233px;overflow:hidden;">customservicehdt123@gmail.com &lt;customservicehdt123@gmail.com&gt;</div>
<div style="position:absolute;right:1137.4px;top:508.74px;font-size:11px;line-height:13px;font-weight:400;color:#444;white-space:nowrap;font-family:'Liberation Sans', sans-serif;letter-spacing:0.1px;">23-05-2025 04:00:33 PM</div>
<div style="position:absolute;left:81px;top:529.74px;font-size:11px;line-height:13px;font-weight:400;color:#555;white-space:nowrap;font-family:'Liberation Sans', sans-serif;letter-spacing:0.34px;">Closed</div>
<div style="position:absolute;left:33px;top:544px;width:488px;height:1px;background:#ebebeb;"></div>
<svg style="position:absolute;left:36px;top:553px;overflow:visible" width="12" height="10" viewBox="0 0 12 10"><g transform="translate(0.40 0.90)"><rect x="0.6" y="0.6" width="9.8" height="7.4" rx="0.6" fill="none" stroke="#333" stroke-width="1.1"/><path d="M0.8 1.2 L5.5 4.8 L10.2 1.2" fill="none" stroke="#333" stroke-width="1"/></g></svg>
<div style="position:absolute;left:81px;top:545.74px;font-size:11px;line-height:13px;font-weight:400;color:#111;white-space:nowrap;font-family:'Liberation Sans', sans-serif;letter-spacing:0.5px;-webkit-text-stroke:0.45px #111;width:233px;overflow:hidden;">customservicehdt123@gmail.com &lt;customservicehdt123@gmail.com&gt;</div>
<div style="position:absolute;right:1137.4px;top:545.74px;font-size:11px;line-height:13px;font-weight:400;color:#444;white-space:nowrap;font-family:'Liberation Sans', sans-serif;letter-spacing:0.1px;">16-05-2025 04:01:12 PM</div>
<div style="position:absolute;left:81px;top:566.74px;font-size:11px;line-height:13px;font-weight:400;color:#555;white-space:nowrap;font-family:'Liberation Sans', sans-serif;letter-spacing:0.34px;">Closed</div>
<div style="position:absolute;left:33px;top:581px;width:488px;height:1px;background:#ebebeb;"></div>
<svg style="position:absolute;left:36px;top:590px;overflow:visible" width="12" height="10" viewBox="0 0 12 10"><g transform="translate(0.40 0.90)"><rect x="0.6" y="0.6" width="9.8" height="7.4" rx="0.6" fill="none" stroke="#333" stroke-width="1.1"/><path d="M0.8 1.2 L5.5 4.8 L10.2 1.2" fill="none" stroke="#333" stroke-width="1"/></g></svg>
<div style="position:absolute;left:81px;top:582.74px;font-size:11px;line-height:13px;font-weight:400;color:#111;white-space:nowrap;font-family:'Liberation Sans', sans-serif;letter-spacing:0.5px;-webkit-text-stroke:0.45px #111;width:233px;overflow:hidden;">Google &lt;no-reply@accounts.google.com&gt;</div>
<div style="position:absolute;right:1137.4px;top:582.74px;font-size:11px;line-height:13px;font-weight:400;color:#444;white-space:nowrap;font-family:'Liberation Sans', sans-serif;letter-spacing:0.1px;">08-05-2025 10:20:04 AM</div>
<div style="position:absolute;left:33px;top:606px;width:498px;height:36px;background:#f8f8f8;"></div>
<svg style="position:absolute;left:46px;top:621px;overflow:visible" width="8" height="7" viewBox="0 0 8 7"><g transform="translate(0.50 0.30)"><rect x="0" y="0" width="1.1" height="6" fill="#9a9a9a"/><path d="M6.2 0 L1.3 3 L6.2 6 Z" fill="#9a9a9a"/></g></svg>
<svg style="position:absolute;left:70px;top:621px;overflow:visible" width="7" height="7" viewBox="0 0 7 7"><g transform="translate(0.80 0.30)"><path d="M4.9 0 L0.3 3 L4.9 6 Z" fill="#9a9a9a"/></g></svg>
<svg style="position:absolute;left:93px;top:621px;overflow:visible" width="7" height="7" viewBox="0 0 7 7"><g transform="translate(0.70 0.30)"><path d="M0.3 0 L4.9 3 L0.3 6 Z" fill="#9a9a9a"/></g></svg>
<svg style="position:absolute;left:116px;top:621px;overflow:visible" width="8" height="7" viewBox="0 0 8 7"><g transform="translate(0.20 0.30)"><rect x="5.3" y="0" width="1.1" height="6" fill="#9a9a9a"/><path d="M0 0 L4.9 3 L0 6 Z" fill="#9a9a9a"/></g></svg>
<div style="position:absolute;left:141.5px;top:613px;width:62px;height:23px;background:#f9f9f9;border:1px solid #dedede;border-radius:3px;box-sizing:border-box;"></div>
<div style="position:absolute;left:148.5px;top:617.74px;font-size:11px;line-height:13px;font-weight:400;color:#444;white-space:nowrap;font-family:'Liberation Sans', sans-serif;">20</div>
<svg style="position:absolute;left:189px;top:622px;overflow:visible" width="7" height="6" viewBox="0 0 7 6"><g transform="translate(0.50 0.50)"><path d="M0 0 L6 0 L3.0 5 Z" fill="#333"/></g></svg>
<div style="position:absolute;left:209.5px;top:617.74px;font-size:11px;line-height:13px;font-weight:400;color:#555;white-space:nowrap;font-family:'Liberation Sans', sans-serif;letter-spacing:0.48px;">items per page</div>
<div style="position:absolute;left:561px;top:339px;width:533px;height:319px;background:#fff;border:1px solid #e6e6e6;border-radius:14px;box-sizing:border-box;"></div>
<div style="position:absolute;left:562px;top:381px;width:531px;height:1px;background:#e9e9e9;"></div>
<div style="position:absolute;left:577.5px;top:347.55px;font-size:13px;line-height:16px;font-weight:400;color:#343a52;white-space:nowrap;font-family:'Liberation Sans', sans-serif;letter-spacing:0.17px;-webkit-text-stroke:0.25px #343a52;">Chart (Danny Ocean \Requests by req...</div>
<svg style="position:absolute;left:987px;top:354px;overflow:visible" width="13" height="13" viewBox="0 0 13 13"><g transform="translate(0.80 0.30)"><g fill="#333"><rect x="4.8" y="0.7" width="2.4" height="2.6" transform="rotate(0 6 6)"/><rect x="4.8" y="0.7" width="2.4" height="2.6" transform="rotate(60 6 6)"/><rect x="4.8" y="0.7" width="2.4" height="2.6" transform="rotate(120 6 6)"/><rect x="4.8" y="0.7" width="2.4" height="2.6" transform="rotate(180 6 6)"/><rect x="4.8" y="0.7" width="2.4" height="2.6" transform="rotate(240 6 6)"/><rect x="4.8" y="0.7" width="2.4" height="2.6" transform="rotate(300 6 6)"/><circle cx="6" cy="6" r="3.9"/></g><circle cx="6" cy="6" r="1.7" fill="#fff"/></g></svg>
<svg style="position:absolute;left:1012px;top:354px;overflow:visible" width="13" height="13" viewBox="0 0 13 13"><g transform="translate(0.00 0.10)"><path d="M9.4 9.0 A4.4 4.4 0 1 1 8.3 2.4" fill="none" stroke="#333" stroke-width="1.15"/><path d="M6.7 4.2 L10.8 4.2 L10.8 0.2 Z" fill="#333"/></g></svg>
<svg style="position:absolute;left:1037px;top:356px;overflow:visible" width="10" height="10" viewBox="0 0 10 10"><g transform="translate(0.10 0.10)"><path d="M1.1 1.1 L7.9 7.9 M7.9 1.1 L1.1 7.9" stroke="#333" stroke-width="1.35"/></g></svg>
<svg style="position:absolute;left:1059px;top:354px;overflow:visible" width="13" height="12" viewBox="0 0 13 12"><g transform="translate(0.70 0.00)"><rect x="0.5" y="0.5" width="10.8" height="9.9" rx="1.2" fill="#333"/><rect x="1.5" y="4.1" width="8.8" height="4.9" fill="#fff"/><rect x="1.5" y="9" width="8.8" height="0.9" fill="#999"/></g></svg>
<svg style="position:absolute;left:1040px;top:398px;overflow:visible" width="11" height="13" viewBox="0 0 11 13"><g transform="translate(0.00 0.50)"><path d="M0.55 0.55 H6 L8.6 3.2 V11.2 H0.55 Z" fill="#fff" stroke="#555" stroke-width="1"/><path d="M5.8 0.55 V3.4 H8.6 Z" fill="#444"/><path d="M2.6 5.6 L6.2 9.4 M6.2 5.6 L2.6 9.4" stroke="#333" stroke-width="1.15"/></g></svg>
<div style="position:absolute;left:1056px;top:395px;width:24px;height:21px;background:#138a73;border-radius:3px;"></div>
<svg style="position:absolute;left:1062px;top:399px;overflow:visible" width="13" height="13" viewBox="0 0 13 13"><g transform="translate(0.00 0.00)"><path d="M5.3 2 A4.5 4.5 0 1 0 10 6.7 L5.3 6.7 Z" fill="none" stroke="#fff" stroke-width="1.3"/><path d="M6.8 0.6 A4.6 4.6 0 0 1 11.4 5.2 L6.8 5.2 Z" fill="#fff"/></g></svg>
<svg style="position:absolute;left:0;top:0" width="1654" height="670"><path d="M827.5 529 L827.50 453.00 A76 76 0 1 1 806.09 601.92 Z" fill="#c54182" stroke="#c54182" stroke-width="0.3"/><path d="M827.5 529 L806.09 601.92 A76 76 0 0 1 770.06 578.77 Z" fill="#8fa1c8" stroke="#8fa1c8" stroke-width="0.3"/><path d="M827.5 529 L770.06 578.77 A76 76 0 0 1 752.27 539.82 Z" fill="#c657e6" stroke="#c657e6" stroke-width="0.3"/><path d="M827.5 529 L752.27 539.82 A76 76 0 0 1 786.41 465.06 Z" fill="#7b22da" stroke="#7b22da" stroke-width="0.3"/><path d="M827.5 529 L786.41 465.06 A76 76 0 0 1 827.50 453.00 Z" fill="#b766ec" stroke="#b766ec" stroke-width="0.3"/><path d="M827.5 529 L806.09 601.92" stroke="#fff" stroke-opacity="0.5" stroke-width="0.6"/><path d="M827.5 529 L770.06 578.77" stroke="#fff" stroke-opacity="0.5" stroke-width="0.6"/><path d="M827.5 529 L752.27 539.82" stroke="#fff" stroke-opacity="0.5" stroke-width="0.6"/><path d="M827.5 529 L786.41 465.06" stroke="#fff" stroke-opacity="0.5" stroke-width="0.6"/><path d="M827.5 529 L827.50 453.00" stroke="#fff" stroke-opacity="0.5" stroke-width="0.6"/><polyline points="788.6,431.7 798.8,431.7 804.7,450.4" fill="none" stroke="#808080" stroke-width="1.1"/><polyline points="738,487 741,487 752.8,495.2" fill="none" stroke="#808080" stroke-width="1.1"/><polyline points="738.8,571.7 741.3,571.7 753,563" fill="none" stroke="#808080" stroke-width="1.1"/><polyline points="772,615 775,615 783,599" fill="none" stroke="#808080" stroke-width="1.1"/><polyline points="909,540.4 918.5,543.5 924.7,543.5" fill="none" stroke="#808080" stroke-width="1.1"/></svg>
<div style="position:absolute;left:779.8px;top:425.68px;font-size:10px;line-height:12px;font-weight:400;color:#333;white-space:nowrap;font-family:'Liberation Serif', serif;transform:translateX(-50%);">1</div>
<div style="position:absolute;left:729px;top:481.68px;font-size:10px;line-height:12px;font-weight:400;color:#333;white-space:nowrap;font-family:'Liberation Serif', serif;transform:translateX(-50%);">2</div>
<div style="position:absolute;left:730.4px;top:565.67px;font-size:10px;line-height:12px;font-weight:400;color:#333;white-space:nowrap;font-family:'Liberation Serif', serif;transform:translateX(-50%);">1</div>
<div style="position:absolute;left:763.3px;top:609.67px;font-size:10px;line-height:12px;font-weight:400;color:#333;white-space:nowrap;font-family:'Liberation Serif', serif;transform:translateX(-50%);">1</div>
<div style="position:absolute;left:932px;top:538.67px;font-size:10px;line-height:12px;font-weight:400;color:#333;white-space:nowrap;font-family:'Liberation Serif', serif;transform:translateX(-50%);">6</div>
<div style="position:absolute;left:1106px;top:339px;width:534px;height:319px;background:#fff;border:1px solid #e6e6e6;border-radius:14px;box-sizing:border-box;"></div>
<div style="position:absolute;left:1107px;top:381px;width:532px;height:1px;background:#e9e9e9;"></div>
<div style="position:absolute;left:1123px;top:347.55px;font-size:13px;line-height:16px;font-weight:400;color:#343a52;white-space:nowrap;font-family:'Liberation Sans', sans-serif;letter-spacing:0.06px;-webkit-text-stroke:0.25px #343a52;">Best Solutions</div>
<svg style="position:absolute;left:1533px;top:354px;overflow:visible" width="13" height="13" viewBox="0 0 13 13"><g transform="translate(0.80 0.30)"><g fill="#333"><rect x="4.8" y="0.7" width="2.4" height="2.6" transform="rotate(0 6 6)"/><rect x="4.8" y="0.7" width="2.4" height="2.6" transform="rotate(60 6 6)"/><rect x="4.8" y="0.7" width="2.4" height="2.6" transform="rotate(120 6 6)"/><rect x="4.8" y="0.7" width="2.4" height="2.6" transform="rotate(180 6 6)"/><rect x="4.8" y="0.7" width="2.4" height="2.6" transform="rotate(240 6 6)"/><rect x="4.8" y="0.7" width="2.4" height="2.6" transform="rotate(300 6 6)"/><circle cx="6" cy="6" r="3.9"/></g><circle cx="6" cy="6" r="1.7" fill="#fff"/></g></svg>
<svg style="position:absolute;left:1558px;top:354px;overflow:visible" width="13" height="13" viewBox="0 0 13 13"><g transform="translate(0.00 0.10)"><path d="M9.4 9.0 A4.4 4.4 0 1 1 8.3 2.4" fill="none" stroke="#333" stroke-width="1.15"/><path d="M6.7 4.2 L10.8 4.2 L10.8 0.2 Z" fill="#333"/></g></svg>
<svg style="position:absolute;left:1583px;top:356px;overflow:visible" width="10" height="10" viewBox="0 0 10 10"><g transform="translate(0.10 0.10)"><path d="M1.1 1.1 L7.9 7.9 M7.9 1.1 L1.1 7.9" stroke="#333" stroke-width="1.35"/></g></svg>
<svg style="position:absolute;left:1605px;top:354px;overflow:visible" width="13" height="12" viewBox="0 0 13 12"><g transform="translate(0.70 0.00)"><rect x="0.5" y="0.5" width="10.8" height="9.9" rx="1.2" fill="#333"/><rect x="1.5" y="4.1" width="8.8" height="4.9" fill="#fff"/><rect x="1.5" y="9" width="8.8" height="0.9" fill="#999"/></g></svg>
<div style="position:absolute;left:1119px;top:394px;width:210px;height:18px;background:#e4f1ee;"></div>
<svg style="position:absolute;left:1127px;top:397px;overflow:visible" width="10" height="12" viewBox="0 0 10 12"><g transform="translate(0.70 0.00)"><rect x="0.6" y="2.2" width="7.8" height="8.2" rx="1" fill="none" stroke="#16887b" stroke-width="1.1"/><path d="M2.6 2.6 L4.5 0.3 L6.4 2.6 Z" fill="#16887b"/><rect x="2.2" y="2.0" width="4.6" height="1.2" fill="#16887b"/><path d="M2 5.6 H2.9 M4 5.6 H7 M2 7.6 H2.9 M4 7.6 H7" stroke="#16887b" stroke-width="0.9"/></g></svg>
<div style="position:absolute;left:1139.5px;top:396.74px;font-size:11px;line-height:13px;font-weight:700;color:#16887b;white-space:nowrap;font-family:'Liberation Sans', sans-serif;letter-spacing:0.1px;">Draft</div>
<svg style="position:absolute;left:1183px;top:397px;overflow:visible" width="10" height="12" viewBox="0 0 10 12"><g transform="translate(0.50 0.00)"><rect x="0.6" y="0.6" width="7.8" height="9.8" rx="0.8" fill="none" stroke="#16887b" stroke-width="1.1"/><path d="M2.6 2.5 H3.6 M5.4 2.5 H6.4 M2.6 4.5 H3.6 M5.4 4.5 H6.4 M2.6 6.5 H3.6 M5.4 6.5 H6.4 M3.5 10 V8.2 H5.5 V10" stroke="#16887b" stroke-width="1"/></g></svg>
<div style="position:absolute;left:1194.6px;top:396.74px;font-size:11px;line-height:13px;font-weight:700;color:#16887b;white-space:nowrap;font-family:'Liberation Sans', sans-serif;letter-spacing:0.1px;">Internal</div>
<svg style="position:absolute;left:1254px;top:397px;overflow:visible" width="12" height="12" viewBox="0 0 12 12"><g transform="translate(0.00 0.00)"><circle cx="5.5" cy="5.5" r="4.8" fill="none" stroke="#16887b" stroke-width="1.1"/><ellipse cx="5.5" cy="5.5" rx="2.2" ry="4.8" fill="none" stroke="#16887b" stroke-width="1"/><path d="M0.7 5.5 H10.3 M1.4 3.2 H9.6 M1.4 7.8 H9.6" stroke="#16887b" stroke-width="0.9"/></g></svg>
<div style="position:absolute;left:1268.3px;top:396.74px;font-size:11px;line-height:13px;font-weight:700;color:#16887b;white-space:nowrap;font-family:'Liberation Sans', sans-serif;letter-spacing:-0.13px;">Published</div>
<div style="position:absolute;left:1119px;top:415px;width:508px;height:25px;background:#fff;border:1px solid #e3e3e3;border-radius:3px;box-sizing:border-box;"></div>
<div style="position:absolute;left:1127px;top:420.74px;font-size:11px;line-height:13px;font-weight:400;color:#b0b0b0;white-space:nowrap;font-family:'Liberation Sans', sans-serif;letter-spacing:0.07px;font-style:italic;">Search List</div>
<div style="position:absolute;left:1600px;top:421px;width:1px;height:13px;background:#e0e0e0;"></div>
<svg style="position:absolute;left:1606px;top:421px;overflow:visible" width="13" height="13" viewBox="0 0 13 13"><g transform="translate(0.50 0.50)"><circle cx="5.2" cy="4.9" r="3.5" fill="none" stroke="#16887b" stroke-width="1.1"/><path d="M7.8 7.6 L10.7 10.5" stroke="#16887b" stroke-width="1.7" stroke-linecap="round"/></g></svg>
<div style="position:absolute;left:1119px;top:453px;width:508px;height:2px;background:#e8e8e8;"></div>
<svg style="position:absolute;left:1128px;top:462px;overflow:visible" width="10" height="12" viewBox="0 0 10 12"><g transform="translate(0.70 0.00)"><rect x="0.6" y="2.2" width="7.8" height="8.2" rx="1" fill="none" stroke="#333" stroke-width="1.1"/><path d="M2.6 2.6 L4.5 0.3 L6.4 2.6 Z" fill="#333"/><rect x="2.2" y="2.0" width="4.6" height="1.2" fill="#333"/><path d="M2 5.6 H2.9 M4 5.6 H7 M2 7.6 H2.9 M4 7.6 H7" stroke="#333" stroke-width="0.9"/></g></svg>
<div style="position:absolute;left:1171px;top:461.74px;font-size:11px;line-height:13px;font-weight:400;color:#555;white-space:nowrap;font-family:'Liberation Sans', sans-serif;letter-spacing:0.1px;">Solution ID &nbsp;: <b style="color:#222">17</b></div>
<div style="position:absolute;left:1171px;top:476.74px;font-size:11px;line-height:13px;font-weight:400;color:#111;white-space:nowrap;font-family:'Liberation Sans', sans-serif;letter-spacing:0.35px;-webkit-text-stroke:0.45px #111;width:239px;overflow:hidden;">Draft: Getting error 21 when logging into application</div>
<div style="position:absolute;right:47.40000000000009px;top:461.74px;font-size:11px;line-height:13px;font-weight:400;color:#555;white-space:nowrap;font-family:'Liberation Sans', sans-serif;letter-spacing:0.3px;">Category &nbsp;: <b style="color:#222">Software</b></div>
<div style="position:absolute;right:47.40000000000009px;top:476.74px;font-size:11px;line-height:13px;font-weight:400;color:#555;white-space:nowrap;font-family:'Liberation Sans', sans-serif;letter-spacing:0.25px;">Number of Hits &nbsp;: <b style="color:#222">1</b></div>
<div style="position:absolute;left:1119px;top:503px;width:497px;height:1px;background:#ebebeb;"></div>
<svg style="position:absolute;left:1128px;top:511px;overflow:visible" width="10" height="12" viewBox="0 0 10 12"><g transform="translate(0.70 0.00)"><rect x="0.6" y="2.2" width="7.8" height="8.2" rx="1" fill="none" stroke="#333" stroke-width="1.1"/><path d="M2.6 2.6 L4.5 0.3 L6.4 2.6 Z" fill="#333"/><rect x="2.2" y="2.0" width="4.6" height="1.2" fill="#333"/><path d="M2 5.6 H2.9 M4 5.6 H7 M2 7.6 H2.9 M4 7.6 H7" stroke="#333" stroke-width="0.9"/></g></svg>
<div style="position:absolute;left:1171px;top:510.74px;font-size:11px;line-height:13px;font-weight:400;color:#555;white-space:nowrap;font-family:'Liberation Sans', sans-serif;letter-spacing:0.1px;">Solution ID &nbsp;: <b style="color:#222">8</b></div>
<div style="position:absolute;left:1171px;top:525.74px;font-size:11px;line-height:13px;font-weight:400;color:#111;white-space:nowrap;font-family:'Liberation Sans', sans-serif;letter-spacing:0.35px;-webkit-text-stroke:0.45px #111;width:239px;overflow:hidden;">Draft: How to copy data from a corrupted user profile</div>
<div style="position:absolute;right:47.40000000000009px;top:510.74px;font-size:11px;line-height:13px;font-weight:400;color:#555;white-space:nowrap;font-family:'Liberation Sans', sans-serif;letter-spacing:0.3px;">Category &nbsp;: <b style="color:#222">Microsoft</b></div>
<div style="position:absolute;right:47.40000000000009px;top:525.74px;font-size:11px;line-height:13px;font-weight:400;color:#555;white-space:nowrap;font-family:'Liberation Sans', sans-serif;letter-spacing:0.25px;">Number of Hits &nbsp;: <b style="color:#222">9</b></div>
<div style="position:absolute;left:1119px;top:552px;width:497px;height:1px;background:#ebebeb;"></div>
<svg style="position:absolute;left:1128px;top:560px;overflow:visible" width="10" height="12" viewBox="0 0 10 12"><g transform="translate(0.70 0.00)"><rect x="0.6" y="2.2" width="7.8" height="8.2" rx="1" fill="none" stroke="#333" stroke-width="1.1"/><path d="M2.6 2.6 L4.5 0.3 L6.4 2.6 Z" fill="#333"/><rect x="2.2" y="2.0" width="4.6" height="1.2" fill="#333"/><path d="M2 5.6 H2.9 M4 5.6 H7 M2 7.6 H2.9 M4 7.6 H7" stroke="#333" stroke-width="0.9"/></g></svg>
<div style="position:absolute;left:1171px;top:559.74px;font-size:11px;line-height:13px;font-weight:400;color:#555;white-space:nowrap;font-family:'Liberation Sans', sans-serif;letter-spacing:0.1px;">Solution ID &nbsp;: <b style="color:#222">4</b></div>
<div style="position:absolute;left:1171px;top:574.74px;font-size:11px;line-height:13px;font-weight:400;color:#111;white-space:nowrap;font-family:'Liberation Sans', sans-serif;letter-spacing:0.35px;-webkit-text-stroke:0.45px #111;width:239px;overflow:hidden;">Draft: How To Set up VPN Connections in Windows</div>
<div style="position:absolute;right:47.40000000000009px;top:559.74px;font-size:11px;line-height:13px;font-weight:400;color:#555;white-space:nowrap;font-family:'Liberation Sans', sans-serif;letter-spacing:0.3px;">Category &nbsp;: <b style="color:#222">VPN</b></div>
<div style="position:absolute;right:47.40000000000009px;top:574.74px;font-size:11px;line-height:13px;font-weight:400;color:#555;white-space:nowrap;font-family:'Liberation Sans', sans-serif;letter-spacing:0.25px;">Number of Hits &nbsp;: <b style="color:#222">1</b></div>
<div style="position:absolute;left:1120px;top:598px;width:506px;height:35px;background:#f8f8f8;"></div>
<svg style="position:absolute;left:1133px;top:613px;overflow:visible" width="8" height="7" viewBox="0 0 8 7"><g transform="translate(0.90 0.80)"><rect x="0" y="0" width="1.1" height="6" fill="#9a9a9a"/><path d="M6.2 0 L1.3 3 L6.2 6 Z" fill="#9a9a9a"/></g></svg>
<svg style="position:absolute;left:1158px;top:613px;overflow:visible" width="7" height="7" viewBox="0 0 7 7"><g transform="translate(0.30 0.80)"><path d="M4.9 0 L0.3 3 L4.9 6 Z" fill="#9a9a9a"/></g></svg>
<svg style="position:absolute;left:1203px;top:613px;overflow:visible" width="7" height="7" viewBox="0 0 7 7"><g transform="translate(0.90 0.80)"><path d="M0.3 0 L4.9 3 L0.3 6 Z" fill="#9a9a9a"/></g></svg>
<svg style="position:absolute;left:1226px;top:613px;overflow:visible" width="8" height="7" viewBox="0 0 8 7"><g transform="translate(0.00 0.80)"><rect x="5.3" y="0" width="1.1" height="6" fill="#9a9a9a"/><path d="M0 0 L4.9 3 L0 6 Z" fill="#9a9a9a"/></g></svg>
<div style="position:absolute;left:1172px;top:606px;width:22px;height:22px;background:#d3d3d3;"></div>
<div style="position:absolute;left:1183px;top:609.74px;font-size:11px;line-height:13px;font-weight:400;color:#555;white-space:nowrap;font-family:'Liberation Sans', sans-serif;transform:translateX(-50%);">1</div>
<div style="position:absolute;left:1251.5px;top:605px;width:62px;height:23px;background:#f9f9f9;border:1px solid #dedede;border-radius:3px;box-sizing:border-box;"></div>
<div style="position:absolute;left:1258.5px;top:609.74px;font-size:11px;line-height:13px;font-weight:400;color:#444;white-space:nowrap;font-family:'Liberation Sans', sans-serif;">25</div>
<svg style="position:absolute;left:1299px;top:614px;overflow:visible" width="7" height="6" viewBox="0 0 7 6"><g transform="translate(0.50 0.50)"><path d="M0 0 L6 0 L3.0 5 Z" fill="#333"/></g></svg>
<div style="position:absolute;left:1319.5px;top:609.74px;font-size:11px;line-height:13px;font-weight:400;color:#555;white-space:nowrap;font-family:'Liberation Sans', sans-serif;letter-spacing:0.48px;">items per page</div>
</body></html>
